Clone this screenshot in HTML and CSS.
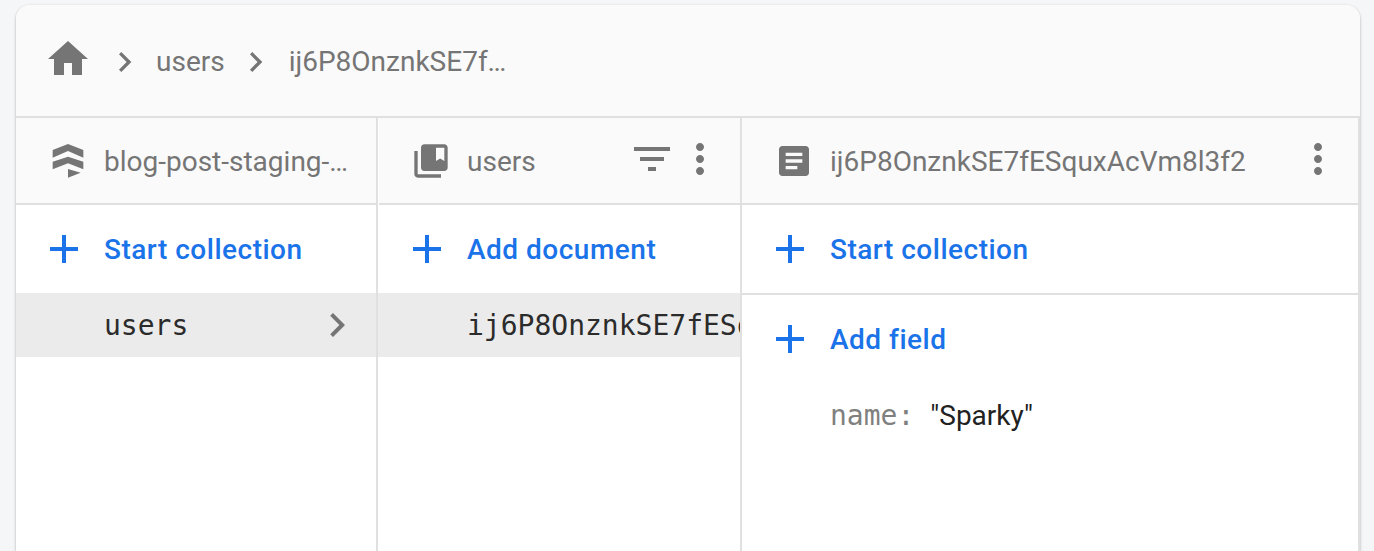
FILE: index.html
```html
<!DOCTYPE html>
<html lang="en">
<head>
    <meta charset="UTF-8" />
    <title>Cloud Firestore</title>
    <link rel="stylesheet" href="styles.css">
</head>
<body>
    <div class="panel">
        <nav class="crumbs">
            <svg class="home" viewBox="2 3 20 17"><path d="M10 20v-6h4v6h5v-8h3L12 3 2 12h3v8z"/></svg>
            <svg class="crumb-arrow" viewBox="8 5 9 14"><path d="M10 6L8.59 7.41 13.17 12l-4.58 4.59L10 18l6-6z"/></svg>
            <span class="crumb">users</span>
            <svg class="crumb-arrow" viewBox="8 5 9 14"><path d="M10 6L8.59 7.41 13.17 12l-4.58 4.59L10 18l6-6z"/></svg>
            <span class="crumb crumb-last">ij6P8OnznkSE7f…</span>
        </nav>

        <div class="columns">
            <section class="col col-root">
                <header class="col-head">
                    <svg class="head-icon" viewBox="0 0 120 120"><polygon points="60,9 106,27 106,50 60,30 14,50 14,27"/><polygon points="60,47 106,62 106,85 60,67 14,85 14,62"/><polygon points="60,84 98,95 60,110"/></svg>
                    <span class="head-title">blog-post-staging-…</span>
                </header>
                <a class="action">
                    <svg class="plus" viewBox="0 0 24 24"><path d="M19 13h-6v6h-2v-6H5v-2h6V5h2v6h6v2z"/></svg>
                    Start collection
                </a>
                <div class="row">
                    <span class="row-text">users</span>
                    <svg class="row-arrow" viewBox="8 5 9 14"><path d="M10 6L8.59 7.41 13.17 12l-4.58 4.59L10 18l6-6z"/></svg>
                </div>
            </section>

            <section class="col col-docs">
                <header class="col-head">
                    <svg class="head-icon" viewBox="0 0 24 24"><path d="M4 6H2v14c0 1.100.9 2 2 2h14v-2H4V6zm16-4H8c-1.100 0-2 .9-2 2v12c0 1.100.9 2 2 2h12c1.100 0 2-.9 2-2V4c0-1.100-.9-2-2-2zm0 10l-2.500-1.500L15 12V4h5v8z"/></svg>
                    <span class="head-title">users</span>
                    <svg class="tool" viewBox="0 0 24 24"><path d="M10 18h4v-2h-4v2zM3 6v2h18V6H3zm3 7h12v-2H6v2z"/></svg>
                    <svg class="tool" viewBox="0 0 24 24"><path d="M12 8c1.100 0 2-.9 2-2s-.9-2-2-2-2 .9-2 2 .9 2 2 2zm0 2c-1.100 0-2 .9-2 2s.9 2 2 2 2-.9 2-2-.9-2-2-2zm0 6c-1.100 0-2 .9-2 2s.9 2 2 2 2-.9 2-2-.9-2-2-2z"/></svg>
                </header>
                <a class="action">
                    <svg class="plus" viewBox="0 0 24 24"><path d="M19 13h-6v6h-2v-6H5v-2h6V5h2v6h6v2z"/></svg>
                    Add document
                </a>
                <div class="row">
                    <span class="row-text">ij6P8OnznkSE7fESquxAcVm8l3f2</span>
                </div>
            </section>

            <section class="col col-doc">
                <header class="col-head">
                    <svg class="head-icon" viewBox="0 0 24 24"><path d="M19 3H5c-1.100 0-2 .9-2 2v14c0 1.100.9 2 2 2h14c1.100 0 2-.9 2-2V5c0-1.100-.9-2-2-2zm-5 14H7v-2h7v2zm3-4H7v-2h10v2zm0-4H7V7h10v2z"/></svg>
                    <span class="head-title">ij6P8OnznkSE7fESquxAcVm8l3f2</span>
                    <svg class="tool" viewBox="0 0 24 24"><path d="M12 8c1.100 0 2-.9 2-2s-.9-2-2-2-2 .9-2 2 .9 2 2 2zm0 2c-1.100 0-2 .9-2 2s.9 2 2 2 2-.9 2-2-.9-2-2-2zm0 6c-1.100 0-2 .9-2 2s.9 2 2 2 2-.9 2-2-.9-2-2-2z"/></svg>
                </header>
                <a class="action action-lined">
                    <svg class="plus" viewBox="0 0 24 24"><path d="M19 13h-6v6h-2v-6H5v-2h6V5h2v6h6v2z"/></svg>
                    Start collection
                </a>
                <a class="action">
                    <svg class="plus" viewBox="0 0 24 24"><path d="M19 13h-6v6h-2v-6H5v-2h6V5h2v6h6v2z"/></svg>
                    Add field
                </a>
                <div class="field">
                    <span class="field-key">name:</span>
                    <span class="field-value">"Sparky"</span>
                </div>
            </section>
        </div>
    </div>
</body>
</html>
```

FILE: styles.css
```css
html, body {
    height: 100%;
}

body {
    margin: 0;
    padding: 5px 14px 0 16px;
    box-sizing: border-box;
    overflow: hidden;
    background: #f5f6f8;
    font-family: 'Roboto', sans-serif;
    color: #757575;
}

svg {
    fill: currentColor;
    flex: none;
    display: block;
}

.panel {
    height: 546px;
    background: #fff;
    border-radius: 14px 14px 0 0;
    box-shadow: 0 1px 3px rgba(0, 0, 0, 0.3);
}

.crumbs {
    height: 111px;
    box-sizing: border-box;
    display: flex;
    align-items: center;
    padding: 2px 0 0 32px;
    background: #fafafa;
    border-radius: 14px 14px 0 0;
    font-size: 28px;
}

.home {
    width: 40px;
    height: 34px;
    margin: 0 30px 7px 0;
}

.crumb-arrow {
    width: 15px;
    height: 24px;
    margin-right: 23px;
}

.crumb {
    margin-right: 24px;
}

.crumb-last {
    margin-left: 2px;
}

.columns {
    display: flex;
    height: 435px;
    overflow: hidden;
    border-top: 2px solid #e0e0e0;
}

.col {
    border-right: 2px solid #e0e0e0;
    box-sizing: border-box;
    min-width: 0;
}

.col-root {
    width: 362px;
}

.col-docs {
    width: 364px;
    padding-left: 1px;
}

.col-doc {
    flex: 1;
}

.col-head {
    height: 87px;
    box-sizing: border-box;
    display: flex;
    align-items: center;
    padding: 0 16px 0 32px;
    background: #fafafa;
    border-bottom: 2px solid #e0e0e0;
    font-size: 28px;
}

.head-icon {
    width: 40px;
    height: 40px;
    margin-right: 16px;
}

.head-title {
    flex: 1;
    padding-top: 2px;
    white-space: nowrap;
}

.tool {
    width: 48px;
    height: 48px;
    margin-bottom: 3px;
}

.action {
    display: flex;
    align-items: center;
    height: 88px;
    box-sizing: border-box;
    padding-left: 24px;
    color: #1a73e8;
    font-size: 28px;
    font-weight: 500;
    letter-spacing: 0.5px;
}

.plus {
    width: 48px;
    height: 48px;
    margin-right: 16px;
}

.action-lined {
    height: 90px;
    border-bottom: 2px solid #e0e0e0;
}

.row {
    display: flex;
    align-items: center;
    justify-content: space-between;
    height: 64px;
    padding: 0 29px 0 88px;
    background: #ebebeb;
    overflow: hidden;
    color: #2b2b2b;
    font-family: 'DejaVu Sans Mono', monospace;
    font-size: 28px;
}

.col-docs .row {
    margin-left: -1px;
    padding-left: 89px;
}

.row-text {
    white-space: nowrap;
}

.row-arrow {
    width: 18px;
    height: 28px;
    color: #757575;
}

.field {
    display: flex;
    align-items: center;
    padding: 16px 0 0 88px;
    font-size: 28px;
}

.field-key {
    font-family: 'DejaVu Sans Mono', monospace;
    margin-right: 16px;
    color: #808080;
}

.field-value {
    color: #212121;
}
```
